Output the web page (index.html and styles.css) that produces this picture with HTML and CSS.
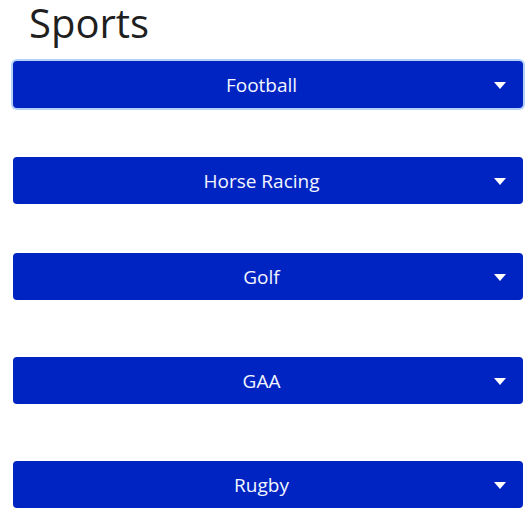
FILE: index.html
```html
<!DOCTYPE html>
<html>
<head>
<meta charset="utf-8">
<link rel="stylesheet" href="styles.css">
</head>
<body>
<div class="page">
  <h1 class="title">Sports</h1>
  <div class="list">
    <button class="dd dd-focus"><span class="label">Football</span><span class="caret"></span></button>
    <button class="dd"><span class="label">Horse Racing</span><span class="caret"></span></button>
    <button class="dd"><span class="label">Golf</span><span class="caret"></span></button>
    <button class="dd dd-wide"><span class="label">GAA</span><span class="caret"></span></button>
    <button class="dd dd-wide"><span class="label">Rugby</span><span class="caret"></span></button>
  </div>
</div>
</body>
</html>
```
FILE: styles.css
```css
html, body {
  margin: 0;
  padding: 0;
  background: #ffffff;
}
.page {
  padding: 0 9px 0 13px;
  font-family: "Open Sans", "Noto Sans", sans-serif;
}
.title {
  margin: 0;
  padding-left: 16px;
  font-size: 40px;
  line-height: 46px;
  font-weight: 400;
  color: #1f1f1f;
}
.list {
  display: flex;
  flex-direction: column;
  margin-top: 15px;
}
.dd {
  position: relative;
  display: block;
  width: 100%;
  height: 47px;
  margin: 0 0 49px 0;
  padding: 0 13px 0 0;
  border: none;
  border-radius: 4px;
  background: #0024c2;
  color: #f4f6ff;
  font-family: "Open Sans", "Noto Sans", sans-serif;
  font-size: 19px;
  text-align: center;
}
.dd-wide {
  margin-top: 8px;
}
.dd:last-child {
  margin-bottom: 0;
}
.dd-focus {
  box-shadow: 0 0 0 2px #b3d0f6;
}
.label {
  display: block;
}
.caret {
  position: absolute;
  right: 17px;
  top: 21px;
  width: 0;
  height: 0;
  border-left: 6.5px solid transparent;
  border-right: 6.5px solid transparent;
  border-top: 7px solid #ffffff;
}
```
